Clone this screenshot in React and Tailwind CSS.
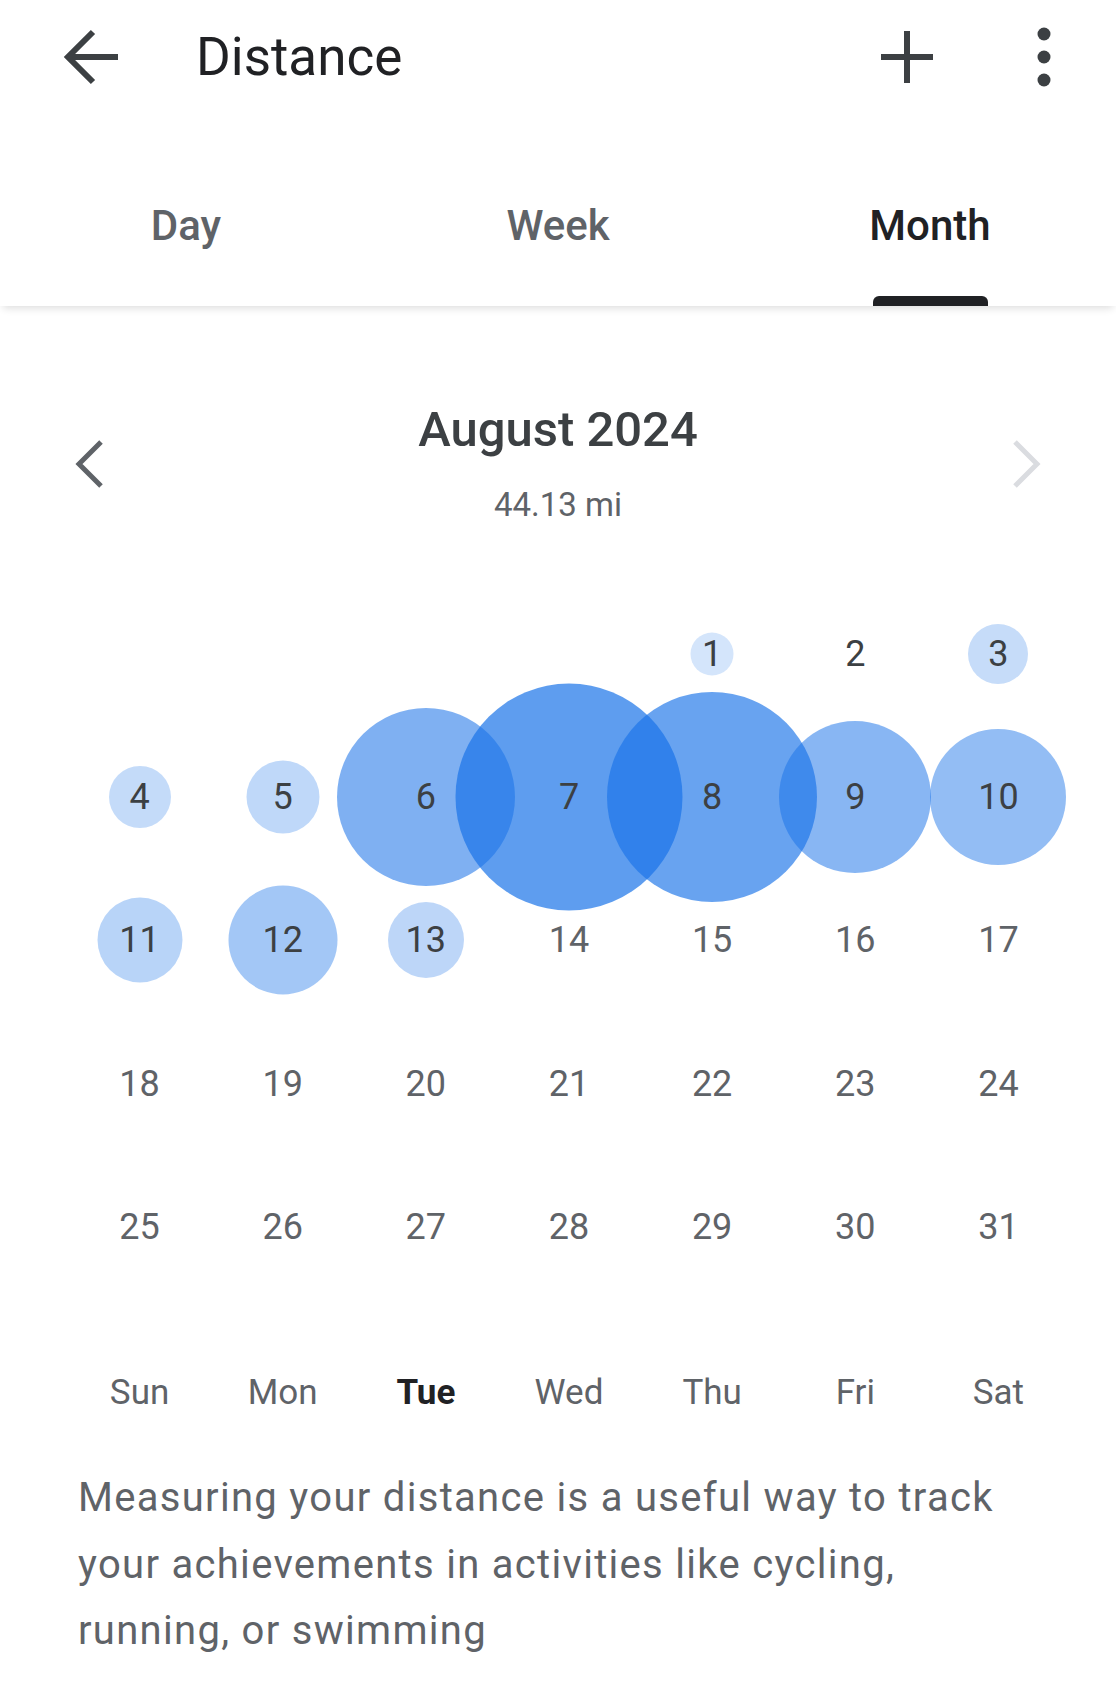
import React from 'react'

// value -> circle size and strength, per day of August
const activity = {
  1: { d: 43, o: 0.19 },
  3: { d: 60, o: 0.25 },
  4: { d: 62, o: 0.26 },
  5: { d: 73, o: 0.28 },
  6: { d: 178, o: 0.56 },
  7: { d: 227, o: 0.7 },
  8: { d: 210, o: 0.66 },
  9: { d: 152, o: 0.52 },
  10: { d: 136, o: 0.47 },
  11: { d: 85, o: 0.31 },
  12: { d: 109, o: 0.4 },
  13: { d: 76, o: 0.29 },
}

const weekdays = ['Sun', 'Mon', 'Tue', 'Wed', 'Thu', 'Fri', 'Sat']

function BackIcon() {
  return (
    <svg width="56" height="56" viewBox="0 0 56 56" fill="none" stroke="#3c4043" strokeWidth="6">
      <path d="M55 28H5" />
      <path d="M30 3L5 28l25 25" />
    </svg>
  )
}

function PlusIcon() {
  return (
    <svg width="56" height="56" viewBox="0 0 56 56" fill="none" stroke="#3c4043" strokeWidth="6">
      <path d="M28 2v52M2 28h52" />
    </svg>
  )
}

function MoreIcon() {
  return (
    <svg width="16" height="60" viewBox="0 0 16 60" fill="#3c4043">
      <circle cx="8" cy="7" r="6.5" />
      <circle cx="8" cy="30" r="6.5" />
      <circle cx="8" cy="53" r="6.5" />
    </svg>
  )
}

function Chevron({ dir, color }) {
  return (
    <svg width="40" height="50" viewBox="0 0 40 50" fill="none" stroke={color} strokeWidth="5">
      {dir === 'left' ? <path d="M31 3L9 25l22 22" /> : <path d="M9 3l22 22L9 47" />}
    </svg>
  )
}

export default function App() {
  const cells = []
  for (let i = 0; i < 4; i++) cells.push(null)
  for (let d = 1; d <= 31; d++) cells.push(d)

  return (
    <div className="w-[1116px] min-h-[1690px] bg-white" style={{ fontFamily: 'Roboto, "Noto Sans", sans-serif' }}>
      {/* top app bar */}
      <div className="h-[114px] flex items-center pl-[63px] pr-[64px]">
        <BackIcon />
        <div className="ml-[77px] text-[53px] text-[#202124] leading-none">Distance</div>
        <div className="ml-auto flex items-center">
          <PlusIcon />
          <div className="ml-[101px]">
            <MoreIcon />
          </div>
        </div>
      </div>

      {/* tabs */}
      <div className="relative z-10 h-[192px] grid grid-cols-3 bg-white shadow-[0_5px_8px_-3px_rgba(0,0,0,0.14)]">
        {['Day', 'Week', 'Month'].map((t) => (
          <div key={t} className="flex flex-col items-center justify-end">
            <div
              className={
                'text-[42px] font-medium leading-[48px] ' +
                (t === 'Month' ? 'text-[#202124]' : 'text-[#5f6368]')
              }
            >
              {t}
            </div>
            <div
              className={
                'mt-[46px] h-[10px] w-[115px] rounded-t-[6px] ' +
                (t === 'Month' ? 'bg-[#202124]' : 'bg-transparent')
              }
            />
          </div>
        ))}
      </div>

      {/* month header */}
      <div className="flex items-center justify-between px-[70px] pt-[96px]">
        <Chevron dir="left" color="#5f6368" />
        <div className="flex flex-col items-center">
          <div className="text-[49px] font-medium leading-[56px] text-[#3c4043]">August 2024</div>
          <div className="mt-[27px] text-[33px] leading-[40px] text-[#5f6368]">44.13 mi</div>
        </div>
        <Chevron dir="right" color="#dadce0" />
      </div>

      {/* calendar */}
      <div className="mt-[57px] pl-[68px] pr-[46px]">
        <div className="grid grid-cols-7">
          {cells.map((d, i) => {
            const a = d ? activity[d] : null
            return (
              <div key={i} className="relative h-[143.4px] flex items-center justify-center">
                {a && (
                  <div
                    className="absolute left-1/2 top-1/2 -translate-x-1/2 -translate-y-1/2 rounded-full bg-[#1a73e8]"
                    style={{ width: a.d, height: a.d, opacity: a.o }}
                  />
                )}
                {d && (
                  <span
                    className={
                      'relative z-10 text-[36px] leading-none ' +
                      (d <= 13 ? 'text-[#3c4043]' : 'text-[#5f6368]')
                    }
                  >
                    {d}
                  </span>
                )}
              </div>
            )
          })}
        </div>

        <div className="mt-[72px] grid grid-cols-7">
          {weekdays.map((w) => (
            <div
              key={w}
              className={
                'text-center text-[35px] leading-[44px] ' +
                (w === 'Tue' ? 'font-bold text-[#202124]' : 'text-[#5f6368]')
              }
            >
              {w}
            </div>
          ))}
        </div>
      </div>

      {/* description */}
      <p className="mt-[50px] pl-[78px] pr-[40px] text-[40px] leading-[66.6px] tracking-[1.3px] text-[#5f6368]">
        <span className="block">Measuring your distance is a useful way to track</span>
        <span className="block">your achievements in activities like cycling,</span>
        <span className="block">running, or swimming</span>
      </p>
    </div>
  )
}
